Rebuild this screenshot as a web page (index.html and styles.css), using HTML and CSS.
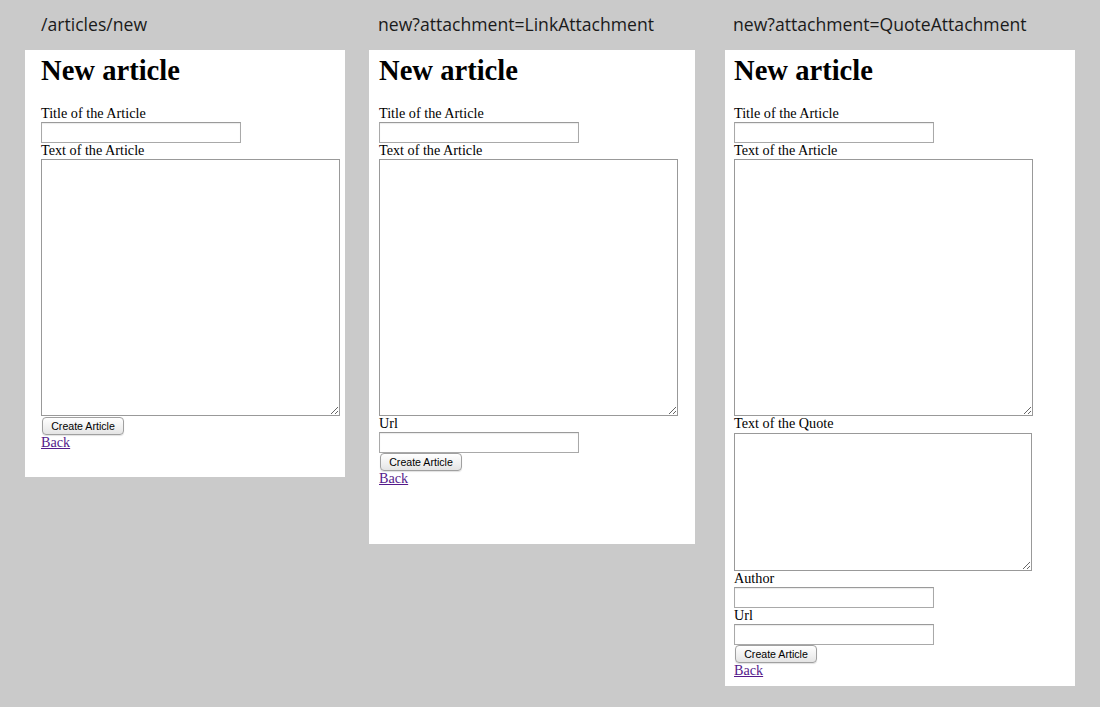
FILE: index.html
```html
<!DOCTYPE html>
<html>
<head>
<meta charset="utf-8">
<title>New article forms</title>
<link rel="stylesheet" href="styles.css">
</head>
<body>
<div class="board">
  <section class="shot shot-plain">
    <div class="caption">/articles/new</div>
    <div class="panel">
      <h1 class="title">New article</h1>
      <form class="form">
        <label class="label">Title of the Article</label>
        <input class="field" type="text">
        <label class="label">Text of the Article</label>
        <textarea class="area area-main"></textarea>
        <button class="btn" type="button">Create Article</button>
        <a class="back" href="#">Back</a>
      </form>
    </div>
  </section>

  <section class="shot shot-link">
    <div class="caption">new?attachment=LinkAttachment</div>
    <div class="panel">
      <h1 class="title">New article</h1>
      <form class="form">
        <label class="label">Title of the Article</label>
        <input class="field" type="text">
        <label class="label">Text of the Article</label>
        <textarea class="area area-main"></textarea>
        <label class="label">Url</label>
        <input class="field" type="text">
        <button class="btn btn-flush" type="button">Create Article</button>
        <a class="back" href="#">Back</a>
      </form>
    </div>
  </section>

  <section class="shot shot-quote">
    <div class="caption">new?attachment=QuoteAttachment</div>
    <div class="panel">
      <h1 class="title">New article</h1>
      <form class="form">
        <label class="label">Title of the Article</label>
        <input class="field" type="text">
        <label class="label">Text of the Article</label>
        <textarea class="area area-main"></textarea>
        <label class="label label-quote">Text of the Quote</label>
        <textarea class="area area-quote"></textarea>
        <label class="label">Author</label>
        <input class="field" type="text">
        <label class="label">Url</label>
        <input class="field" type="text">
        <button class="btn btn-flush" type="button">Create Article</button>
        <a class="back" href="#">Back</a>
      </form>
    </div>
  </section>
</div>
</body>
</html>
```

FILE: styles.css
```css
html, body {
  margin: 0;
  padding: 0;
  background: #cacaca;
}

.board {
  display: flex;
  align-items: flex-start;
  height: 707px;
}

.shot {
  display: flex;
  flex-direction: column;
}

.shot-plain { margin-left: 25px; width: 320px; }
.shot-link  { margin-left: 24px; width: 326px; }
.shot-quote { margin-left: 30px; width: 350px; }

.caption {
  font-family: "Open Sans", "DejaVu Sans", sans-serif;
  font-size: 17.6px;
  line-height: 20px;
  height: 20px;
  margin-top: 14px;
  margin-bottom: 16px;
  color: #1a1a1a;
  white-space: nowrap;
}

.shot-plain .caption { padding-left: 16px; }
.shot-link .caption  { padding-left: 9px; }
.shot-quote .caption { padding-left: 8px; }

.panel {
  background: #fff;
  box-sizing: border-box;
  padding-top: 4px;
  font-family: "Liberation Serif", "Times New Roman", serif;
  color: #000;
}

.shot-plain .panel { height: 427px; padding-left: 16px; }
.shot-link .panel  { height: 494px; padding-left: 10px; }
.shot-quote .panel { height: 636px; padding-left: 9px; }

.title {
  margin: 0 0 18px;
  font-size: 28.6px;
  line-height: 34px;
  font-weight: bold;
}

.form {
  display: flex;
  flex-direction: column;
  align-items: flex-start;
}

.label {
  font-size: 14.2px;
  line-height: 14px;
  height: 16px;
}

.label-quote { height: 17px; }

.field {
  box-sizing: border-box;
  width: 200px;
  height: 21px;
  margin: 0;
  padding: 1px 3px;
  border: 1px solid #a9a9a9;
  border-top-color: #9a9a9a;
  box-shadow: inset 0 1px 1px rgba(0,0,0,0.08);
  background: #fff;
}

.area {
  box-sizing: border-box;
  margin: 0;
  padding: 2px;
  border: 1px solid #999;
  background: #fff;
  resize: both;
}

.area-main  { width: 299px; height: 257px; }
.area-quote { width: 298px; height: 138px; }

.btn {
  box-sizing: border-box;
  height: 18px;
  width: 82px;
  margin: 1px 0 0 1px;
  padding: 0 6px;
  font-family: "Liberation Sans", Arial, sans-serif;
  font-size: 10.6px;
  line-height: 16px;
  color: #000;
  border: 1px solid #a0a0a0;
  border-radius: 4px;
  background: linear-gradient(#ffffff, #f0f0f0 60%, #e4e4e4);
  box-shadow: 0 1px 1px rgba(0,0,0,0.12);
}

.btn-flush { margin-top: 0; }

.back {
  font-size: 14.2px;
  line-height: 14px;
  height: 16px;
  color: #551a8b;
  text-decoration: underline;
}
```
